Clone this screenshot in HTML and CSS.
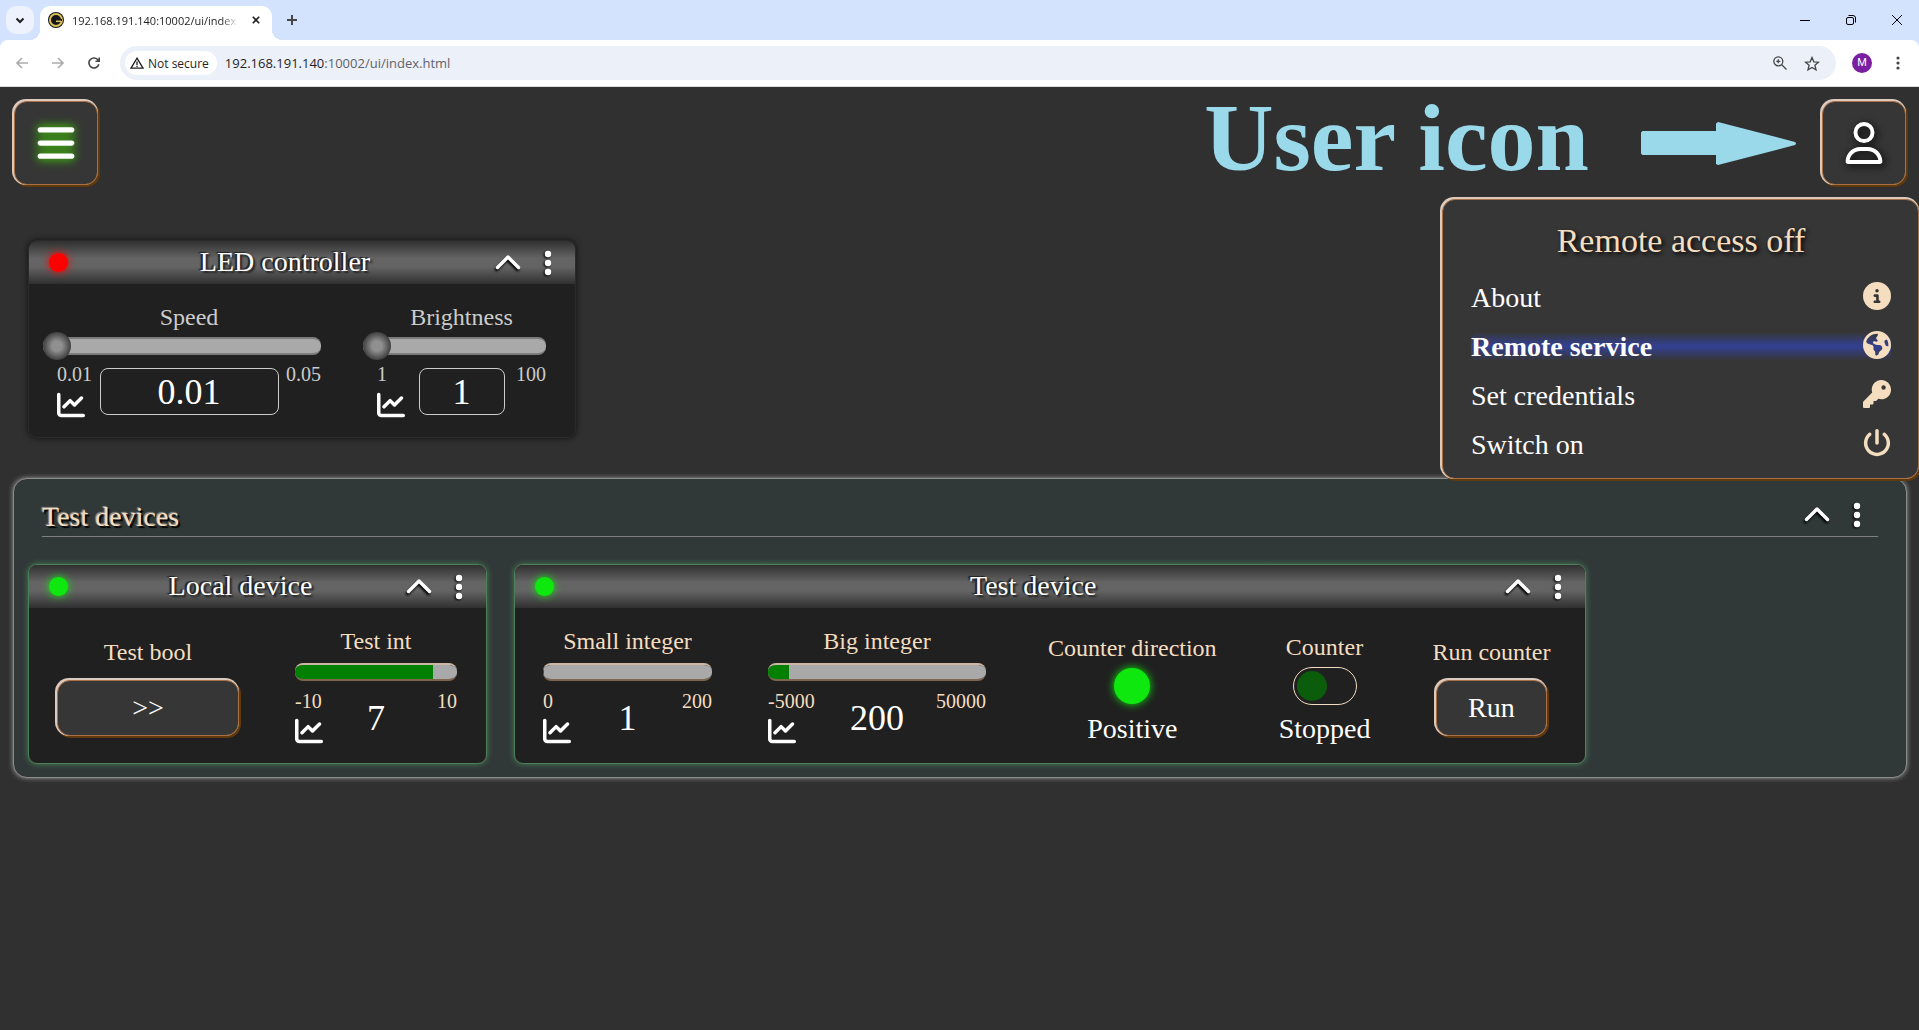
FILE: index.html
```html
<!DOCTYPE html>
<html lang="en">
<head>
<meta charset="utf-8">
<title>Devices</title>
<link rel="stylesheet" href="styles.css">
</head>
<body>
<svg class="symbols" aria-hidden="true">
  <symbol id="bars" viewBox="0 0 448 512"><path d="M0 96C0 78.300 14.300 64 32 64H416c17.700 0 32 14.300 32 32s-14.300 32-32 32H32C14.300 128 0 113.700 0 96zM0 256c0-17.700 14.300-32 32-32H416c17.700 0 32 14.300 32 32s-14.300 32-32 32H32c-17.700 0-32-14.300-32-32zM448 416c0 17.700-14.300 32-32 32H32c-17.700 0-32-14.300-32-32s14.300-32 32-32H416c17.700 0 32 14.300 32 32z"/></symbol>
  <symbol id="user" viewBox="0 0 448 512"><path d="M304 128a80 80 0 1 0 -160 0 80 80 0 1 0 160 0zM96 128a128 128 0 1 1 256 0A128 128 0 1 1 96 128zM49.300 464H398.700c-8.900-63.300-63.300-112-129-112H178.300c-65.700 0-120.100 48.700-129 112zM0 482.300C0 383.800 79.800 304 178.300 304h91.400C368.200 304 448 383.800 448 482.300c0 16.400-13.300 29.700-29.700 29.700H29.700C13.300 512 0 498.700 0 482.300z"/></symbol>
  <symbol id="info" viewBox="0 0 512 512"><path d="M256 512A256 256 0 1 0 256 0a256 256 0 1 0 0 512zM216 336h24V272H216c-13.300 0-24-10.700-24-24s10.700-24 24-24h48c13.300 0 24 10.700 24 24v88h8c13.300 0 24 10.700 24 24s-10.700 24-24 24H216c-13.300 0-24-10.700-24-24s10.700-24 24-24zm40-208a32 32 0 1 1 0 64 32 32 0 1 1 0-64z"/></symbol>
  <symbol id="earth" viewBox="0 0 512 512"><path d="M57.700 193l9.400 16.400c8.300 14.500 21.900 25.200 38 29.800L163 255.700c17.200 4.900 29 20.600 29 38.500v39.900c0 11 6.200 21 16 25.900s16 14.900 16 25.900v39c0 15.600 14.900 26.900 29.900 22.600c16.100-4.600 28.600-17.500 32.700-33.800l2.800-11.200c4.200-16.900 15.200-31.400 30.300-40l8.100-4.600c15-8.500 24.200-24.500 24.200-41.700v-8.300c0-12.700-5.100-24.900-14.100-33.900l-3.900-3.900c-9-9-21.200-14.100-33.900-14.100H257c-11.100 0-22.100-2.900-31.800-8.400l-34.500-19.700c-4.300-2.500-7.600-6.500-9.200-11.200c-3.200-9.600 1.100-20 10.200-24.500l5.900-3c6.600-3.300 14.300-3.900 21.300-1.500l23.200 7.700c8.200 2.700 17.200-.4 21.900-7.500c4.700-7 4.200-16.300-1.200-22.800l-13.600-16.300c-10-12-9.900-29.500 .3-41.300l15.700-18.300c8.800-10.300 10.200-25 3.500-36.700l-2.400-4.200c-3.500-.2-6.900-.3-10.400-.3C163.100 48 84.400 108.900 57.700 193zM464 256c0-36.800-9.600-71.400-26.400-101.500L412 164.800c-15.700 6.300-23.800 23.800-18.500 39.800l16.900 50.700c3.500 10.400 12 18.300 22.600 20.900l29.100 7.300c1.200-9 1.800-18.200 1.800-27.500zM0 256a256 256 0 1 1 512 0A256 256 0 1 1 0 256z"/></symbol>
  <symbol id="key" viewBox="0 0 512 512"><path d="M336 352c97.200 0 176-78.800 176-176S433.200 0 336 0S160 78.800 160 176c0 18.700 2.900 36.800 8.300 53.700L7 391c-4.500 4.500-7 10.600-7 17v80c0 13.300 10.700 24 24 24h80c13.300 0 24-10.700 24-24V448h40c13.300 0 24-10.700 24-24V384h40c6.400 0 12.500-2.500 17-7l33.300-33.300c16.900 5.400 35 8.300 53.700 8.300zM376 96a40 40 0 1 1 0 80 40 40 0 1 1 0-80z"/></symbol>
  <symbol id="power" viewBox="0 0 512 512"><path d="M288 32c0-17.700-14.300-32-32-32s-32 14.300-32 32V256c0 17.700 14.300 32 32 32s32-14.300 32-32V32zM143.500 120.600c13.600-11.300 15.400-31.500 4.100-45.100s-31.500-15.400-45.100-4.100C49.700 115.400 16 181.800 16 256c0 132.500 107.500 240 240 240s240-107.500 240-240c0-74.200-33.800-140.600-86.600-184.600c-13.600-11.300-33.800-9.400-45.100 4.100s-9.400 33.800 4.100 45.100c38.900 32.300 63.500 81 63.500 135.400c0 97.200-78.800 176-176 176s-176-78.800-176-176c0-54.400 24.700-103.100 63.500-135.400z"/></symbol>
  <symbol id="chart" viewBox="0 0 512 512"><path d="M64 64c0-17.700-14.300-32-32-32S0 46.300 0 64V400c0 44.200 35.800 80 80 80H480c17.700 0 32-14.300 32-32s-14.300-32-32-32H80c-8.800 0-16-7.200-16-16V64zm406.600 86.600c12.500-12.500 12.500-32.800 0-45.300s-32.800-12.500-45.300 0L320 210.700l-57.400-57.400c-12.500-12.500-32.800-12.500-45.300 0l-112 112c-12.500 12.500-12.500 32.800 0 45.300s32.800 12.500 45.300 0L240 221.300l57.400 57.400c12.500 12.500 32.800 12.500 45.300 0l128-128z"/></symbol>
  <symbol id="chevron" viewBox="0 0 28 28"><path d="M3.500 18.500 14 8l10.500 10.500" fill="none" stroke="currentColor" stroke-width="3.400" stroke-linecap="round" stroke-linejoin="round"/></symbol>
  <symbol id="dots" viewBox="0 0 8 28"><circle cx="4" cy="5" r="3.200"/><circle cx="4" cy="14" r="3.200"/><circle cx="4" cy="23" r="3.200"/></symbol>
</svg>

<div class="browser">
  <div class="tabstrip">
    <button class="tab-search" aria-label="Search tabs"><svg width="10" height="7" viewBox="0 0 10 7"><path d="M1.500 1.500 5 5l3.500-3.500"/></svg></button>
    <div class="tab">
      <svg class="favicon" width="16" height="16" viewBox="0 0 16 16"><circle cx="8" cy="8" r="8" fill="#15151a"/><circle cx="8" cy="8" r="6" fill="none" stroke="#d9c05a" stroke-width="2"/><path d="M5 7h9v2H5z" fill="#15151a"/><path d="M8 8.500h5v1.600H8z" fill="#d9c05a"/></svg>
      <span class="tab-title">192.168.191.140:10002/ui/index.html</span>
      <button class="plain" aria-label="Close tab"><svg width="10" height="10" viewBox="0 0 10 10"><path d="m1 1 8 8M9 1 1 9"/></svg></button>
    </div>
    <button class="plain new-tab" aria-label="New tab"><svg width="12" height="12" viewBox="0 0 12 12"><path d="M6 1v10M1 6h10"/></svg></button>
    <div class="window-buttons">
      <button class="plain" aria-label="Minimize"><svg class="thin" width="10" height="10" viewBox="0 0 10 10"><path d="M0 5.500h10"/></svg></button>
      <button class="plain" aria-label="Restore"><svg class="thin" width="10" height="10" viewBox="0 0 10 10"><rect x=".5" y="2.500" width="7" height="7" rx="1.500"/><path d="M2.500.5H7a2.500 2.500 0 0 1 2.500 2.500v4.500"/></svg></button>
      <button class="plain" aria-label="Close"><svg class="thin" width="10" height="10" viewBox="0 0 10 10"><path d="m0 0 10 10M10 0 0 10"/></svg></button>
    </div>
  </div>
  <div class="toolbar">
    <div class="nav">
      <button class="plain faded" aria-label="Back"><svg width="12" height="12" viewBox="0 0 12 12"><path d="M12 6H1M6 1 1 6l5 5"/></svg></button>
      <button class="plain faded" aria-label="Forward"><svg width="12" height="12" viewBox="0 0 12 12"><path d="M0 6h11M6 1l5 5-5 5"/></svg></button>
      <button class="plain" aria-label="Reload"><svg width="12" height="12" viewBox="0 0 12 12"><path d="M10.800 7.200A5 5 0 1 1 9.600 2.500L11.200 4M11.200.5V4.200H7.500"/></svg></button>
    </div>
    <div class="omnibox">
      <button class="chip"><svg width="14" height="12" viewBox="0 0 14 12"><path d="M7 1.200 13 11.200H1zM7 4.500v3.500M7 8.800v1.200"/></svg>Not secure</button>
      <div class="url">192.168.191.140<span>:10002/ui/index.html</span></div>
      <button class="plain" aria-label="Zoom"><svg width="14" height="14" viewBox="0 0 14 14"><circle cx="5.300" cy="5.300" r="4.500"/><path d="m8.500 8.500 5 5M5.300 3.300v4M3.300 5.300h4"/></svg></button>
      <button class="plain" aria-label="Bookmark"><svg width="16" height="15" viewBox="0 0 16 15"><path d="m8 1.500 1.800 4.300 4.700.4-3.600 3 1.100 4.600L8 11.400l-4 2.400 1.100-4.600-3.600-3 4.700-.4z"/></svg></button>
    </div>
    <button class="avatar" aria-label="Profile">M</button>
    <button class="plain kebab" aria-label="Browser menu"><svg width="4" height="14" viewBox="0 0 4 14"><circle cx="2" cy="2" r="1.600"/><circle cx="2" cy="7" r="1.600"/><circle cx="2" cy="12" r="1.600"/></svg></button>
  </div>
</div>

<div class="app">
  <header class="top">
    <button class="bevel square menu-button" aria-label="Menu"><svg><use href="#bars"/></svg></button>
    <div class="note">User icon</div>
    <svg class="arrow" viewBox="0 0 155 43"><path d="M1.500 9H75V1.500L77 0 154 20q2 1.500 0 3L77 43l-2-1V33H1.500L0 31.500v-21z"/></svg>
    <button class="bevel square user-button" aria-label="User"><svg><use href="#user"/></svg></button>
    <nav class="bevel user-menu">
      <h2>Remote access off</h2>
      <a href="#about">About<svg><use href="#info"/></svg></a>
      <a href="#remote" class="current">Remote service<svg><use href="#earth"/></svg></a>
      <a href="#credentials">Set credentials<svg><use href="#key"/></svg></a>
      <a href="#switch">Switch on<svg><use href="#power"/></svg></a>
    </nav>
  </header>

  <main>
    <div class="cards loose">
      <section class="card offline">
        <div class="card-head">
          <span class="lamp"></span>
          <h3>LED controller</h3>
          <button class="tool" aria-label="Collapse"><svg class="chev"><use href="#chevron"/></svg></button>
          <button class="tool" aria-label="Options"><svg class="dots"><use href="#dots"/></svg></button>
        </div>
        <div class="card-body">
          <div class="field editable wide">
            <label for="speed">Speed</label>
            <input type="range" id="speed" min="0.01" max="0.05" step="0.01" value="0.01">
            <div class="scale">
              <div class="low">0.01<button class="tool" aria-label="Chart"><svg class="chart"><use href="#chart"/></svg></button></div>
              <input class="value speed-value" type="text" aria-label="Speed value" value="0.01">
              <div class="high">0.05</div>
            </div>
          </div>
          <div class="field editable narrow">
            <label for="brightness">Brightness</label>
            <input type="range" id="brightness" min="1" max="100" value="1">
            <div class="scale">
              <div class="low">1<button class="tool" aria-label="Chart"><svg class="chart"><use href="#chart"/></svg></button></div>
              <input class="value brightness-value" type="text" aria-label="Brightness value" value="1">
              <div class="high">100</div>
            </div>
          </div>
        </div>
      </section>
    </div>

    <section class="group">
      <div class="group-head">
        <h2>Test devices</h2>
        <button class="tool" aria-label="Collapse"><svg class="chev"><use href="#chevron"/></svg></button>
        <button class="tool" aria-label="Options"><svg class="dots"><use href="#dots"/></svg></button>
      </div>
      <div class="cards">
        <section class="card">
          <div class="card-head">
            <span class="lamp"></span>
            <h3>Local device</h3>
            <button class="tool" aria-label="Collapse"><svg class="chev"><use href="#chevron"/></svg></button>
            <button class="tool" aria-label="Options"><svg class="dots"><use href="#dots"/></svg></button>
          </div>
          <div class="card-body">
            <div class="field action">
              <label for="bool">Test bool</label>
              <button class="bevel long" id="bool">&gt;&gt;</button>
            </div>
            <div class="field slim">
              <label for="int">Test int</label>
              <progress id="int" max="20" value="17"></progress>
              <div class="scale">
                <div class="low">-10<button class="tool" aria-label="Chart"><svg class="chart"><use href="#chart"/></svg></button></div>
                <output class="value">7</output>
                <div class="high">10</div>
              </div>
            </div>
          </div>
        </section>
        <section class="card">
          <div class="card-head">
            <span class="lamp"></span>
            <h3>Test device</h3>
            <button class="tool" aria-label="Collapse"><svg class="chev"><use href="#chevron"/></svg></button>
            <button class="tool" aria-label="Options"><svg class="dots"><use href="#dots"/></svg></button>
          </div>
          <div class="card-body">
            <div class="field narrow">
              <label for="small">Small integer</label>
              <progress id="small" max="200" value="1"></progress>
              <div class="scale">
                <div class="low">0<button class="tool" aria-label="Chart"><svg class="chart"><use href="#chart"/></svg></button></div>
                <output class="value">1</output>
                <div class="high">200</div>
              </div>
            </div>
            <div class="field medium">
              <label for="big">Big integer</label>
              <progress id="big" max="55000" value="5200"></progress>
              <div class="scale">
                <div class="low">-5000<button class="tool" aria-label="Chart"><svg class="chart"><use href="#chart"/></svg></button></div>
                <output class="value">200</output>
                <div class="high">50000</div>
              </div>
            </div>
            <div class="field state">
              <div class="caption">Counter direction</div>
              <span class="bulb"></span>
              <div class="status">Positive</div>
            </div>
            <div class="field state">
              <label for="counter">Counter</label>
              <input type="checkbox" role="switch" class="switch" id="counter">
              <div class="status">Stopped</div>
            </div>
            <div class="field action">
              <label for="run">Run counter</label>
              <button class="bevel short" id="run">Run</button>
            </div>
          </div>
        </section>
      </div>
    </section>
  </main>
</div>
</body>
</html>
```
FILE: styles.css
```css
* { box-sizing: border-box; }

:root {
  --page: #303030;
  --panel: #363636;
  --cream: #f5dec0;
}

body {
  margin: 0;
  min-height: 100vh;
  display: flex;
  flex-direction: column;
  background: var(--page);
  font-family: "Liberation Serif", "Times New Roman", serif;
  overflow-x: hidden;
}

button, input { font: inherit; color: inherit; margin: 0; }
button { padding: 0; border: 0; background: none; }
h2, h3 { margin: 0; font-weight: normal; }
svg { display: block; fill: currentColor; }
.symbols { position: absolute; width: 0; height: 0; }

/* browser window */
.browser { font-family: "Open Sans", "Noto Sans", sans-serif; background: #d3e3fd; color: #1f1f1f; }
.browser svg { fill: none; stroke: currentColor; stroke-width: 2; }
.browser svg.thin { stroke-width: 1; }
.browser .favicon { stroke: none; }
.plain { display: grid; place-items: center; width: 20px; height: 20px; color: #444746; }

.tabstrip { display: flex; align-items: center; height: 40px; padding: 0 6px; }
.tab-search { display: grid; place-items: center; width: 28px; height: 28px; border-radius: 10px; background: #edf2fd; margin-right: 6px; }
.tab {
  position: relative;
  display: flex; align-items: center; gap: 8px;
  align-self: flex-end;
  width: 232px; height: 34px; padding: 0 6px 6px 8px;
  background: #fff; border-radius: 10px 10px 0 0;
}
.tab::before, .tab::after {
  content: ""; position: absolute; bottom: 0; width: 10px; height: 10px;
}
.tab::before { left: -10px; background: radial-gradient(circle at 0 0, transparent 10px, #fff 10px); }
.tab::after { right: -10px; background: radial-gradient(circle at 100% 0, transparent 10px, #fff 10px); }
.tab-title {
  flex: 1; overflow: hidden; white-space: nowrap; font-size: 11px;
  mask-image: linear-gradient(to right, #000 90%, transparent);
}
.tab .plain { color: #1f1f1f; }
.tab .plain svg { width: 8px; }
.new-tab { margin-left: 10px; }
.window-buttons { display: flex; gap: 26px; margin-left: auto; padding-right: 6px; }
.window-buttons .plain { color: #000; }

.toolbar {
  display: flex; align-items: center;
  height: 47px; padding: 0 11px 0 12px;
  background: #fff; border-bottom: 1px solid #dadce0; border-radius: 8px 8px 0 0;
}
.nav { display: flex; gap: 16px; width: 108px; }
.nav .plain svg { stroke-width: 1.600; }
.nav .faded { color: #adadad; }
.omnibox {
  flex: 1; display: flex; align-items: center; gap: 12px;
  height: 34px; padding: 0 14px 0 5px; border-radius: 17px; background: #ecf0f9;
}
.chip {
  display: flex; align-items: center; gap: 4px;
  height: 24px; padding: 0 8px 0 5px; border-radius: 12px;
  background: #fff; font-size: 12px; font-weight: 500; white-space: nowrap;
}
.chip svg, .omnibox .plain svg { stroke-width: 1.300; }
.url { flex: 1; font-size: 13px; margin-left: -4px; }
.url span { color: #5f6368; }
.avatar {
  width: 20px; height: 20px; border-radius: 50%;
  margin: 0 16px; background: #7b1fa2; color: #fff;
  font-family: Roboto, sans-serif; font-size: 11px; line-height: 20px;
}
.browser .kebab svg { fill: currentColor; stroke: none; }

/* application */
.app { flex: 1; color: #fff; }

.bevel {
  background: var(--panel);
  border: 1px solid #a87044;
  border-radius: 13px;
  box-shadow: -1px -1px 0 1px #dccabe, 1px 1px 0 1px #60390c;
}

.top { position: relative; display: flex; align-items: center; padding: 14px 13px 14px 14px; }
.square { display: grid; place-items: center; width: 84px; height: 84px; }
.square svg { width: 38px; height: 42px; }
.menu-button svg { filter: drop-shadow(0 0 4px #3fa810) drop-shadow(0 0 4px #3a8c18); }
.user-button svg { filter: drop-shadow(2px 2px 4px #000); }
.note {
  margin-left: auto; align-self: flex-start;
  font-size: 96px; line-height: 74px; font-weight: bold; color: #99d9ea;
}
.arrow { width: 155px; height: 43px; margin: 0 26px 0 52px; fill: #99d9ea; }

.user-menu {
  position: absolute; z-index: 2; top: 112px; right: 0;
  display: flex; flex-direction: column; gap: 17px;
  width: 477px; padding: 21px 27px 17px 28px;
}
.user-menu h2 {
  font-size: 34px; line-height: 40px; margin-bottom: 4px;
  text-align: center; color: var(--cream); text-shadow: 2px 2px 4px #000;
}
.user-menu a {
  display: flex; justify-content: space-between; align-items: center;
  height: 32px; font-size: 28px; line-height: 32px; color: #fff; text-decoration: none;
}
.user-menu svg { width: 28px; height: 28px; margin-bottom: 4px; fill: var(--cream); }
.user-menu .current {
  font-weight: bold; border-radius: 10px;
  background: linear-gradient(transparent 3%, #33408f 45%, #33408f 50%, transparent 92%);
}

main { padding: 0 12px 13px 13px; }
.cards { display: flex; flex-wrap: wrap; gap: 27px; }
.loose { padding: 41px 15px 40px; }

.card {
  display: flex; flex-direction: column;
  border: 1px solid #4d8058; border-radius: 9px;
  box-shadow: 0 0 6px #4d8058; background: #202020;
}
.offline { border-color: #2b2b2b; box-shadow: 0 0 6px #101010; }
.card-head {
  display: flex; align-items: center;
  height: 43px; padding: 0 23px 0 20px; border-radius: 8px 8px 0 0;
  background: linear-gradient(#303030, #646464 40%, #646464 60%, #303030);
}
.card-head h3 {
  flex: 1; padding: 0 0 2px 8px; text-align: center; font-size: 28px; line-height: 32px;
  text-shadow: -2px -1px 1px #202020, 2px 2px 2px #202020;
}
.lamp { width: 19px; height: 19px; border-radius: 50%; background: #0fe80f; box-shadow: 0 0 8px #0fe80f; }
.offline .lamp { background: #f00; box-shadow: 0 0 8px #f00; }
.tool { display: block; }
.chev { width: 28px; height: 28px; filter: drop-shadow(-1px 2px 1px #000); }
.dots { width: 8px; height: 28px; margin-left: 22px; filter: drop-shadow(-1px 1px 1px #000); }
.chart { width: 28px; height: 28px; }

.card-body { flex: 1; display: flex; align-items: center; gap: 56px; padding: 19px 29px 18px 28px; }
.field { display: flex; flex-direction: column; align-items: center; color: var(--cream); }
.offline .field { color: #ccc; }
.field label, .caption { padding: 0 6px; font-size: 24px; line-height: 28px; white-space: nowrap; }
.wide { width: 264px; }
.medium { width: 218px; }
.narrow { width: 169px; }
.slim { width: 162px; }

progress {
  appearance: none;
  width: 100%; height: 18px; margin: 8px 0;
  border: solid #cbb8a4; border-width: 2px 0; border-bottom-color: #7c664c;
  border-radius: 8px; overflow: hidden; background: #a9a9a9;
}
progress::-webkit-progress-bar { background: #a9a9a9; }
progress::-webkit-progress-value { background: #008000; }

input[type="range"] {
  appearance: none;
  width: calc(100% + 14px); height: 18px; margin: 6px 0 8px -14px; background: none;
}
input[type="range"]::-webkit-slider-runnable-track {
  height: 18px; border: solid #7c7c7c; border-width: 2px 0;
  border-radius: 8px; background: #a9a9a9;
}
input[type="range"]::-webkit-slider-thumb {
  appearance: none;
  width: 28px; height: 28px; margin-top: -7px; border-radius: 50%;
  background: radial-gradient(#909090 25%, #404040 70%);
}

.scale { display: grid; grid-template-columns: 1fr auto 1fr; width: 100%; font-size: 20px; line-height: 24px; }
.low { display: flex; flex-direction: column; align-items: flex-start; gap: 4px; width: 0; }
.editable .scale { line-height: 22px; }
.editable .low { gap: 6px; }
.low .tool, .value { color: #fff; }
.high { width: 0; justify-self: end; direction: rtl; white-space: nowrap; }
.value { align-self: end; font-size: 36px; line-height: 54px; text-align: center; }
input.value {
  height: 47px; margin-bottom: 4px; padding: 0; line-height: 40px;
  background: none; border: 1px solid #ccc; border-radius: 8px;
}
.speed-value { width: 179px; }
.brightness-value { width: 86px; }

.action { gap: 14px; padding-top: 2px; }
.action button { height: 56px; font-size: 28px; color: #fff; }
.long { width: 182px; }
.short { width: 111px; }

.state { padding-top: 1px; }
.bulb { width: 36px; height: 36px; margin: 6px 0 14px; border-radius: 50%; background: #0fe80f; box-shadow: 0 0 8px #0fe80f; }
.status { font-size: 28px; line-height: 22px; color: #fff; }
.switch {
  appearance: none;
  width: 64px; height: 38px; margin: 6px 0 13px; padding: 3px;
  border: 1px solid var(--cream); border-radius: 19px;
}
.switch::before {
  content: ""; display: block; width: 30px; height: 30px; border-radius: 50%; background: #0b5c0b;
}

.group {
  border: 1px solid #8c8c8c; border-radius: 14px;
  box-shadow: 0 0 5px #a0a0a0; background: #303838;
  padding: 14px 14px 13px;
}
.group-head {
  display: flex; align-items: center;
  margin: 0 14px 27px; padding: 5px 17px 4px 0; height: 44px;
  border-bottom: 1px solid #808080;
}
.group-head h2 {
  flex: 1; padding-top: 4px; font-size: 28px; line-height: 30px; color: var(--cream);
  text-shadow: -1px -1px 1px #999, 2px 2px 1px #000;
}
```
